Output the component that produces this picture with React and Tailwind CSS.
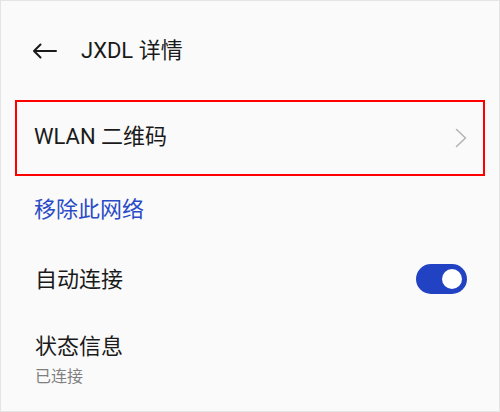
import React from "react";

export default function App() {
  const font = { fontFamily: 'Roboto, "Noto Sans CJK SC", "Noto Sans", sans-serif' };
  return (
    <div
      className="w-[500px] h-[412px] bg-[#fafafa] border border-[#e4e4e4] flex flex-col overflow-hidden text-[#1a1a1a]"
      style={font}
    >
      <div className="h-[99px] flex items-center pl-[31px]">
        <svg width="25" height="16" viewBox="0 0 25 16" className="mt-[1px]">
          <path d="M24 8H2M8.5 1.5L2 8l6.5 6.5" fill="none" stroke="#1a1a1a" strokeWidth="2" strokeLinecap="round" strokeLinejoin="round" />
        </svg>
        <span className="ml-[24px] text-[22px] leading-[28px]">JXDL 详情</span>
      </div>
      <div className="mx-[14px] h-[76px] border-2 border-[#ff0000] flex items-center justify-between pl-[17px] pr-[16px]">
        <span className="text-[22px] leading-[28px] -mt-[2px]">WLAN 二维码</span>
        <svg width="12" height="20" viewBox="0 0 12 20">
          <path d="M1.5 1.5L10.5 10l-9 8.5" fill="none" stroke="#b4b4b4" strokeWidth="1.6" strokeLinecap="round" strokeLinejoin="round" />
        </svg>
      </div>
      <div className="h-[68px] flex items-center pl-[33px]">
        <span className="text-[22px] leading-[28px] text-[#2a4bc6]">移除此网络</span>
      </div>
      <div className="h-[72px] flex items-center justify-between pl-[34px] pr-[32px]">
        <span className="text-[22px] leading-[28px]">自动连接</span>
        <div className="w-[51px] h-[30px] rounded-full bg-[#2142c2] flex items-center justify-end pr-[5px] -mt-[2px]">
          <div className="w-[20px] h-[20px] rounded-full bg-white" />
        </div>
      </div>
      <div className="flex flex-col pl-[34px] pt-[17px]">
        <span className="text-[22px] leading-[28px]">状态信息</span>
        <span className="mt-[6px] text-[16px] leading-[20px] text-[#7f7f7f]">已连接</span>
      </div>
    </div>
  );
}
